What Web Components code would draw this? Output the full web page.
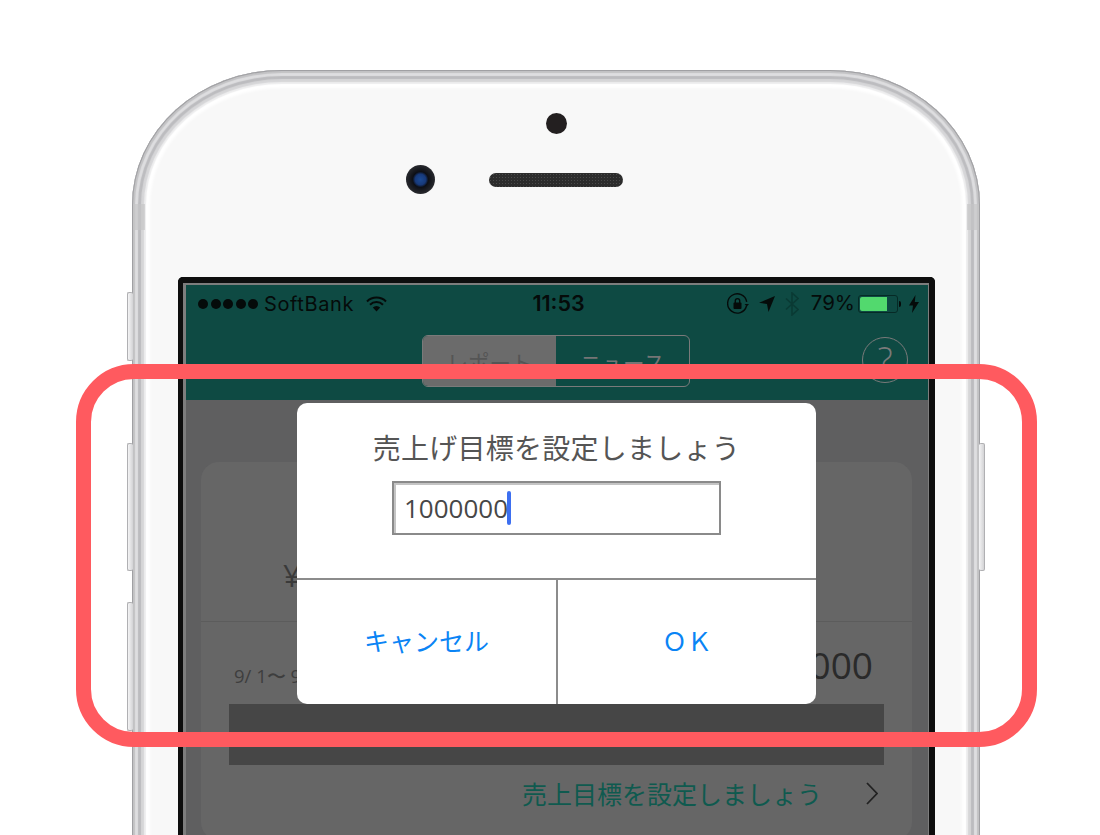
<!DOCTYPE html>
<html lang="ja">
<head>
<meta charset="utf-8">
<title>売上げ目標</title>
<style>
  html, body { margin: 0; height: 835px; overflow: hidden; background: #fff; }
  body { font-family: "Noto Sans CJK JP", "Open Sans", sans-serif; padding: 70px 0 0 132px; box-sizing: border-box; }
</style>
</head>
<body>
<phone-shell>
  <phone-screen>
    <status-bar></status-bar>
    <nav-bar></nav-bar>
    <report-card></report-card>
  </phone-screen>
</phone-shell>
<alert-dialog title-text="売上げ目標を設定しましょう" value="1000000"></alert-dialog>
<note-frame></note-frame>

<script>
class PhoneShell extends HTMLElement {
  constructor() {
    super();
    this.attachShadow({ mode: 'open' }).innerHTML = `
      <style>
        :host { display: block; position: relative; width: 848px; height: 765px; }
        .clip { height: 100%; overflow: hidden; }
        .body {
          box-sizing: border-box; height: 820px; padding: 43px 46px 0;
          border-radius: 150px 150px 0 0 / 135px 135px 0 0;
          background: #f8f8f8;
          box-shadow: inset 0 0 0 1px #a0a0a3, inset 0 0 1px 3px #c2c2c4, inset 0 0 1px 6px #dedee0,
            inset 0 0 1px 9px #bcbcbf, inset 0 0 1px 12px #d6d6d8, inset 0 0 1px 14px #eeeeef, inset 0 0 3px 18px #fff;
        }
        .sensor { width: 21px; height: 21px; margin: 0 auto; border-radius: 50%; background: #231f20; }
        .ear { position: relative; width: 134px; height: 14px; margin: 39px auto 90px; }
        .speaker {
          height: 100%; border-radius: 7px; background-color: #2c2c2c;
          background-image: radial-gradient(#4a4a4a 35%, transparent 40%); background-size: 3px 3px;
        }
        .camera {
          position: absolute; left: -83px; top: -8px; width: 29px; height: 29px; border-radius: 50%; filter: blur(.5px);
          background: radial-gradient(circle, #1c4a94 0, #17397a 26%, #0d0f16 38%, #26272c 68%, #85858a 100%);
        }
        .key {
          position: absolute; width: 6px; box-sizing: border-box; border: 1px solid #b0b0b3;
          border-radius: 2px; background: linear-gradient(to right, #f4f4f5, #d3d3d5);
        }
        .l { left: -5px; border-right: 0; }
        .r { right: -5px; border-left: 0; }
        .band { position: absolute; width: 12px; height: 26px; background: #c4c4c6; opacity: .65; }
      </style>
      <div class="clip">
        <div class="body">
          <div class="sensor"></div>
          <div class="ear"><span class="camera"></span><div class="speaker"></div></div>
          <slot></slot>
        </div>
      </div>
      <i class="key l" style="top:222px;height:69px"></i>
      <i class="key l" style="top:373px;height:128px"></i>
      <i class="key l" style="top:532px;height:129px"></i>
      <i class="key r" style="top:373px;height:128px"></i>
      <i class="band" style="left:1px;top:134px"></i>
      <i class="band" style="right:1px;top:134px"></i>`;
  }
}

class PhoneScreen extends HTMLElement {
  constructor() {
    super();
    this.attachShadow({ mode: 'open' }).innerHTML = `
      <style>
        :host { display: block; width: 757px; box-sizing: border-box; border: solid #0e0e0e; border-width: 6px 6px 0 5px; border-radius: 5px 5px 0 0; }
        .glass { border: solid #7d7d7d; border-width: 2px 1px 0 3px; background: #5f5f60; height: 550px; overflow: hidden; }
      </style>
      <div class="glass"><slot></slot></div>`;
  }
}

class StatusBar extends HTMLElement {
  constructor() {
    super();
    this.attachShadow({ mode: 'open' }).innerHTML = `
      <style>
        :host { display: grid; grid-template-columns: 1fr auto 1fr; align-items: center; height: 37px; padding: 0 9px 0 12px;
          background: #0e4a43; color: #050b0a; font: 20px/1 "Inter", "Liberation Sans", sans-serif; }
        .left, .right { display: flex; align-items: center; }
        .right { justify-content: flex-end; }
        .dots { display: flex; gap: 2.5px; margin-right: 6px; }
        .dots i { width: 10px; height: 10px; border-radius: 50%; background: #050b0a; }
        .carrier { letter-spacing: .6px; margin-right: 12px; font-size: 20px; }
        .time { font-weight: 600; font-size: 21.5px; }
        svg { display: block; }
        .pct { margin: 0 3px 0 12px; font-size: 20.5px; }
        .batt { position: relative; box-sizing: border-box; width: 40px; height: 18px; border: 1px solid #062a26; border-radius: 3px; padding: 1px; }
        .batt b { display: block; width: 76%; height: 100%; background: #52d96e; border-radius: 2px 0 0 2px; }
        .nub { width: 2px; height: 6px; background: #050b0a; margin: 0 8px 0 1px; border-radius: 0 2px 2px 0; }
      </style>
      <div class="left">
        <span class="dots"><i></i><i></i><i></i><i></i><i></i></span>
        <span class="carrier">SoftBank</span>
        <svg width="21" height="16" viewBox="0 0 21 16" fill="none" stroke="#050b0a" stroke-width="2">
          <path d="M1 5.5a13.500 13.500 0 0 1 19 0M4 8.800a9.200 9.200 0 0 1 13 0"/>
          <path d="M6.800 11.600l3.700 3.900 3.700-3.900a5.200 5.200 0 0 0-7.400 0z" fill="#050b0a" stroke="none"/>
        </svg>
      </div>
      <span class="time">11:53</span>
      <div class="right">
        <svg width="22" height="22" viewBox="0 0 22 22" fill="none" stroke="#050b0a" stroke-width="1.4">
          <path d="M19.500 13a9.600 9.600 0 1 1 .2-4.200"/>
          <path d="M17.600 11h4.400l-2.200 2.600z" fill="#050b0a" stroke="none"/>
          <rect x="6.500" y="9.500" width="8" height="6.500" rx="1" fill="#050b0a" stroke="none"/>
          <path d="M8.300 10V7.800a2.200 2.200 0 0 1 4.400 0V10"/>
        </svg>
        <svg style="margin-left:10px" width="16" height="16" viewBox="0 0 16 16"><path d="M16 0L9.500 16 8 8 0 6.800z" fill="#050b0a"/></svg>
        <svg style="margin-left:10px" width="14" height="24" viewBox="0 0 14 24" fill="none" stroke="#0a3a34" stroke-width="1.6"><path d="M1 6.500l12 11L7 23V1l6 5.500-12 11"/></svg>
        <span class="pct">79%</span>
        <span class="batt"><b></b></span><span class="nub"></span>
        <svg width="10" height="18" viewBox="0 0 10 18"><path d="M6.500 0L0 10.500h4L3 18l7-11H5.800z" fill="#050b0a"/></svg>
      </div>`;
  }
}

class NavBar extends HTMLElement {
  constructor() {
    super();
    this.attachShadow({ mode: 'open' }).innerHTML = `
      <style>
        :host { display: flex; justify-content: center; position: relative; height: 78px; padding-top: 13px; box-sizing: border-box; background: #0e4a43; }
        .seg { display: flex; width: 268px; height: 52px; box-sizing: border-box; border: 1px solid #7a7a7a; border-radius: 6px; overflow: hidden; margin-left: -2px; font-size: 21.5px; }
        .seg span { flex: 1; display: flex; align-items: center; justify-content: center; color: #757575; }
        .seg .on { background: #6b6b6b; color: #555; flex: 0 0 133px; }
        .help { position: absolute; right: 20px; top: 15px; width: 46px; height: 46px; box-sizing: border-box; border: 1.5px solid #7a7a7a; border-radius: 50%;
          display: flex; align-items: center; justify-content: center; color: #7a7a7a; font: 300 36px/1 "Open Sans", sans-serif; }
      </style>
      <div class="seg"><span class="on">レポート</span><span>ニュース</span></div>
      <span class="help">?</span>`;
  }
}

class ReportCard extends HTMLElement {
  constructor() {
    super();
    this.attachShadow({ mode: 'open' }).innerHTML = `
      <style>
        :host { display: block; margin: 62px 16px 0 15px; height: 378px; border-radius: 18px; background: #666; overflow: hidden; color: #3e3e3e; }
        .top { box-sizing: border-box; height: 160px; padding: 95px 0 0 82px; border-bottom: 1px solid #5c5c5c; font: 31px/1.2 "Open Sans", sans-serif; color: #3a3a3a; }
        .bottom { padding: 0 28px; }
        .row { display: flex; justify-content: space-between; align-items: flex-end; height: 82px; padding: 0 11px 0 5px; }
        .date { font: 18.5px/1 "Open Sans", sans-serif; margin-bottom: 19px; }
        .amount { font: 37px/1 "Open Sans", sans-serif; color: #2a2a2a; margin-bottom: 21px; }
        .bar { height: 61px; background: #464646; }
        .link { display: flex; justify-content: flex-end; align-items: center; height: 56px; font-size: 25px; color: #0f5a4f; padding-right: 6px; }
        svg { margin-left: 44px; }
      </style>
      <div class="top">¥</div>
      <div class="bottom">
        <div class="row"><span class="date">9/ 1〜 9</span><span class="amount">000</span></div>
        <div class="bar"></div>
        <div class="link">売上目標を設定しましょう
          <svg width="12" height="23" viewBox="0 0 12 23" fill="none" stroke="#222" stroke-width="1.8"><path d="M1 1l10 10.500L1 22"/></svg>
        </div>
      </div>`;
  }
}

class AlertDialog extends HTMLElement {
  constructor() {
    super();
    this.attachShadow({ mode: 'open' }).innerHTML = `
      <style>
        :host { position: absolute; left: 297px; top: 403px; width: 519px; height: 301px; border-radius: 10px; background: #fff; overflow: hidden;
          display: flex; flex-direction: column; font-family: "Noto Sans CJK JP", sans-serif; }
        .main { height: 177px; box-sizing: border-box; padding-top: 24px; display: flex; flex-direction: column; align-items: center; border-bottom: 2px solid #8c8c8c; }
        h2 { margin: 0; font-size: 28px; font-weight: 400; line-height: 40px; letter-spacing: .25px; color: #555; }
        .field { box-sizing: border-box; width: 329px; height: 54px; margin-top: 14px; padding-left: 10px; display: flex; align-items: center;
          border: 2px solid #8a8a8a; box-shadow: inset 2px 2px 0 #c4c4c4; color: #474747; font: 26px/1 "Open Sans", sans-serif; }
        .caret { width: 4px; height: 34px; margin-left: -1px; border-radius: 2px; background: #3d6ff0; }
        .actions { flex: 1; display: grid; grid-template-columns: 259px 1fr; }
        .actions span { display: flex; align-items: center; justify-content: center; color: #0a84f5; font-size: 25px; padding-bottom: 4px; }
        .actions span + span { border-left: 2px solid #8c8c8c; }
      </style>
      <div class="main">
        <h2>${this.getAttribute('title-text')}</h2>
        <div class="field">${this.getAttribute('value')}<i class="caret"></i></div>
      </div>
      <div class="actions"><span>キャンセル</span><span>ＯＫ</span></div>`;
  }
}

class NoteFrame extends HTMLElement {
  constructor() {
    super();
    this.attachShadow({ mode: 'open' }).innerHTML = `
      <style>
        :host { position: absolute; left: 76px; top: 364px; width: 961px; height: 383px; box-sizing: border-box; border: 15px solid #ff5a5f; border-radius: 58px; }
      </style>`;
  }
}

customElements.define('phone-shell', PhoneShell);
customElements.define('phone-screen', PhoneScreen);
customElements.define('status-bar', StatusBar);
customElements.define('nav-bar', NavBar);
customElements.define('report-card', ReportCard);
customElements.define('alert-dialog', AlertDialog);
customElements.define('note-frame', NoteFrame);
</script>
</body>
</html>
